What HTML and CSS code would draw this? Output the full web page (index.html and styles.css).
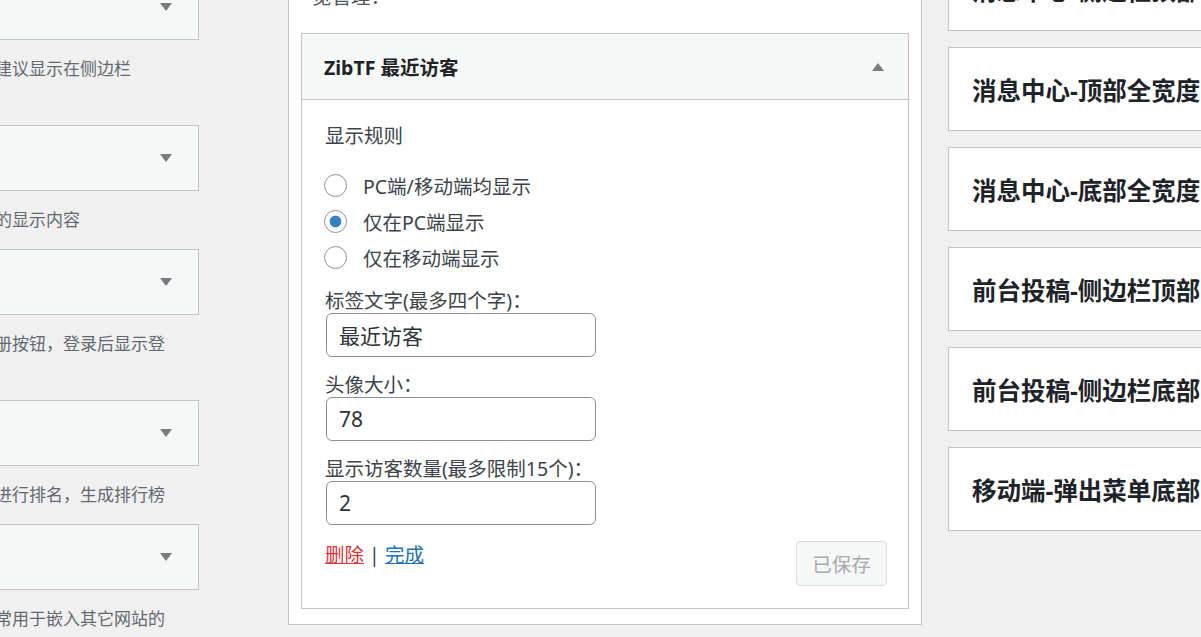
FILE: index.html
```html
<!DOCTYPE html>
<html lang="zh-CN">
<head>
    <meta charset="UTF-8">
    <meta name="viewport" content="width=device-width, initial-scale=1.0">
    <title>小工具</title>
    <link rel="stylesheet" href="styles.css">
</head>
<body>
    <div class="page">
        <!-- 可用小工具 -->
        <div class="available">
            <div class="widget-bar">
                <svg class="arrow" width="12" height="8" viewBox="0 0 12 8"><polygon points="0,0 12,0 6,8"/></svg>
            </div>
            <p class="widget-desc">小工具建议显示在侧边栏<br>使用</p>

            <div class="widget-bar">
                <svg class="arrow" width="12" height="8" viewBox="0 0 12 8"><polygon points="0,0 12,0 6,8"/></svg>
            </div>
            <p class="widget-desc">侧边栏的显示内容</p>

            <div class="widget-bar">
                <svg class="arrow" width="12" height="8" viewBox="0 0 12 8"><polygon points="0,0 12,0 6,8"/></svg>
            </div>
            <p class="widget-desc">登录注册按钮，登录后显示登<br>录信息</p>

            <div class="widget-bar">
                <svg class="arrow" width="12" height="8" viewBox="0 0 12 8"><polygon points="0,0 12,0 6,8"/></svg>
            </div>
            <p class="widget-desc">对用户进行排名，生成排行榜</p>

            <div class="widget-bar">
                <svg class="arrow" width="12" height="8" viewBox="0 0 12 8"><polygon points="0,0 12,0 6,8"/></svg>
            </div>
            <p class="widget-desc">模块通常用于嵌入其它网站的<br>页面中，可以放在任意地方</p>
        </div>

        <!-- 当前侧边栏 -->
        <div class="sidebar-panel">
            <p class="sidebar-desc">显示在用户中心侧边栏，可在后台浏<br>览管理：</p>

            <div class="widget">
                <div class="widget-head">
                    <h3>ZibTF 最近访客</h3>
                    <svg class="arrow" width="12" height="8" viewBox="0 0 12 8"><polygon points="0,8 12,8 6,0"/></svg>
                </div>
                <form class="widget-inside">
                    <p class="rule-title">显示规则</p>
                    <ul class="radio-list">
                        <li><label><input type="radio" name="show"> PC端/移动端均显示</label></li>
                        <li><label><input type="radio" name="show" checked> 仅在PC端显示</label></li>
                        <li><label><input type="radio" name="show"> 仅在移动端显示</label></li>
                    </ul>
                    <p class="field">
                        <label for="title">标签文字(最多四个字)：</label>
                        <input type="text" id="title" value="最近访客">
                    </p>
                    <p class="field">
                        <label for="avatar">头像大小：</label>
                        <input type="text" id="avatar" value="78">
                    </p>
                    <p class="field">
                        <label for="count">显示访客数量(最多限制15个)：</label>
                        <input type="text" id="count" value="2">
                    </p>
                    <div class="actions">
                        <div class="links">
                            <a href="#" class="link-delete">删除</a> | <a href="#" class="link-done">完成</a>
                        </div>
                        <button type="button" class="btn-saved" disabled>已保存</button>
                    </div>
                </form>
            </div>
        </div>

        <!-- 其它侧边栏 -->
        <div class="sidebars">
            <div class="sidebar-box"><h3>消息中心-侧边栏顶部</h3></div>
            <div class="sidebar-box"><h3>消息中心-顶部全宽度</h3></div>
            <div class="sidebar-box"><h3>消息中心-底部全宽度</h3></div>
            <div class="sidebar-box"><h3>前台投稿-侧边栏顶部</h3></div>
            <div class="sidebar-box"><h3>前台投稿-侧边栏底部</h3></div>
            <div class="sidebar-box"><h3>移动端-弹出菜单底部</h3></div>
        </div>
    </div>
</body>
</html>
```

FILE: styles.css
```css
* {
    box-sizing: border-box;
}

body {
    margin: 0;
    height: 637px;
    overflow: hidden;
    background-color: #f0f0f1;
    font-family: "Noto Sans", "Noto Sans CJK SC", sans-serif;
    color: #3c434a;
}

.page {
    display: flex;
    align-items: flex-start;
}

/* 左侧：可用小工具 */
.available {
    flex-shrink: 0;
    width: 255px;
    margin-left: -56px;
    margin-top: -26px;
}

.widget-bar {
    height: 66px;
    background-color: #f6f7f7;
    border: 1px solid #c3c4c7;
    display: flex;
    align-items: center;
    justify-content: flex-end;
    padding-right: 26px;
}

.arrow {
    fill: #787c82;
    display: block;
}

.widget-desc {
    margin: 15px 0 16px;
    font-size: 17px;
    line-height: 27px;
    white-space: nowrap;
    color: #646970;
}

/* 中间：当前侧边栏 */
.sidebar-panel {
    flex-shrink: 0;
    width: 634px;
    margin-left: 89px;
    margin-top: -60px;
    background-color: #fff;
    border: 1px solid #c3c4c7;
    padding: 0 12px 15px;
}

.sidebar-desc {
    margin: 17px 0 23px;
    padding-left: 11px;
    font-size: 19.5px;
    line-height: 26px;
    color: #50575e;
}

.widget {
    background-color: #fff;
    border: 1px solid #c3c4c7;
}

.widget-head {
    height: 66px;
    background-color: #f6f7f7;
    border-bottom: 1px solid #c3c4c7;
    display: flex;
    align-items: center;
    justify-content: space-between;
    padding: 0 24px 0 22px;
}

.widget-head h3 {
    margin: 0;
    font-size: 19.5px;
    font-weight: 700;
    color: #1d2327;
}

.widget-inside {
    padding: 24px 21px 22px 23px;
    font-size: 19.5px;
}

.rule-title {
    margin: 0;
    line-height: 24px;
}

.radio-list {
    list-style: none;
    margin: 19px 0 14px;
    padding: 0;
}

.radio-list label {
    display: flex;
    align-items: center;
    height: 36px;
    gap: 16px;
}

.radio-list input {
    appearance: none;
    width: 23px;
    height: 23px;
    margin: 0 0 0 -1px;
    border: 1px solid #8c8f94;
    border-radius: 50%;
    background-color: #fff;
}

.radio-list input:checked {
    background: radial-gradient(circle, #3582c4 0, #3582c4 5.5px, #fff 6.2px);
}

.field {
    margin: 0 0 16px;
}

.field label {
    display: block;
    line-height: 24px;
}

.field input {
    display: block;
    width: 270px;
    height: 44px;
    margin-left: 1px;
    padding: 0 12px;
    border: 1px solid #8c8f94;
    border-radius: 6px;
    font-family: inherit;
    font-size: 21px;
    color: #2c3338;
    background-color: #fff;
}

.actions {
    display: flex;
    justify-content: space-between;
    align-items: flex-start;
}

.links {
    line-height: 28px;
}

.link-delete {
    color: #d63638;
}

.link-done {
    color: #2271b1;
}

.btn-saved {
    width: 91px;
    height: 45px;
    padding: 0;
    border: 1px solid #dcdcde;
    border-radius: 4px;
    background-color: #f6f7f7;
    color: #a7aaad;
    font-family: inherit;
    font-size: 19.5px;
}

/* 右侧：其它侧边栏 */
.sidebars {
    flex-shrink: 0;
    width: 320px;
    margin-left: 26px;
    margin-top: -53px;
    display: flex;
    flex-direction: column;
    gap: 16px;
}

.sidebar-box {
    height: 84px;
    background-color: #fff;
    border: 1px solid #c3c4c7;
    display: flex;
    align-items: center;
    padding-left: 23px;
}

.sidebar-box h3 {
    margin: 0;
    font-size: 24.5px;
    font-weight: 700;
    color: #1d2327;
    white-space: nowrap;
}
```
